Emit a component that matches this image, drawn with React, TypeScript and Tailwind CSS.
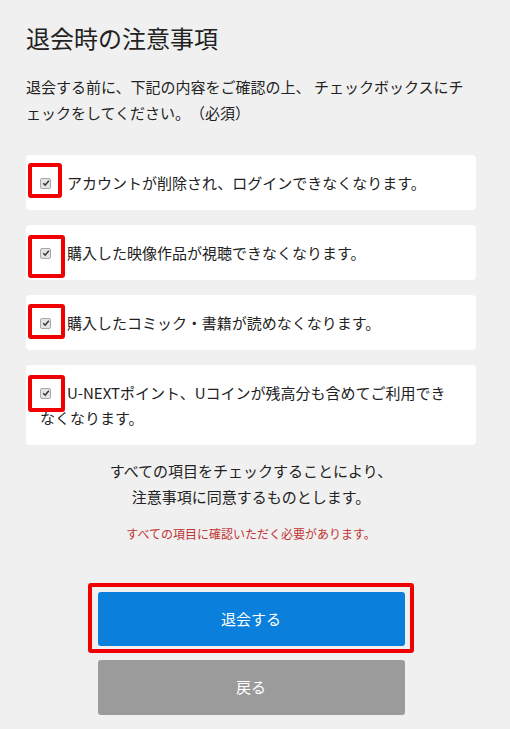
import React from 'react';

// 退会時の注意事項 — チェックリスト画面

const items = [
  { text: 'アカウントが削除され、ログインできなくなります。', box: 'top-[8px] w-[34px] h-[35px]' },
  { text: '購入した映像作品が視聴できなくなります。', box: 'top-[10px] w-[37px] h-[43px]' },
  { text: '購入したコミック・書籍が読めなくなります。', box: 'top-[9px] w-[37px] h-[35px]' },
  { text: 'U-NEXTポイント、Uコインが残高分も含めてご利用できなくなります。', box: 'top-[10px] w-[37px] h-[37px]' },
];

function CheckMark() {
  return (
    <span className="inline-flex items-center justify-center w-[11px] h-[11px] mr-[16px] align-[2px] bg-[#e4e4e4] border border-[#a8a8a8] rounded-[2px]">
      <svg viewBox="0 0 10 10" className="w-[8px] h-[8px]">
        <path d="M1.5 5.2 L4 7.6 L8.6 2.2" fill="none" stroke="#3a3a3a" strokeWidth={1.8} />
      </svg>
    </span>
  );
}

export default function App() {
  return (
    <div
      className="min-h-[729px] bg-[#f0f0f0] pl-[26px] pr-[34px] pt-[20px] pb-[15px] text-[#222] [text-spacing-trim:space-all]"
      style={{ fontFamily: '"Noto Sans CJK JP", "Noto Sans", sans-serif' }}
    >
      {/* 見出し */}
      <h1 className="text-[24px] leading-[36px] font-normal">退会時の注意事項</h1>
      <p className="mt-[18px] text-[15px] leading-[26px]">
        退会する前に、下記の内容をご確認の上、 チェックボックスにチェックをしてください。（必須）
      </p>

      {/* チェック項目 */}
      <div className="mt-[29px] flex flex-col gap-[15px]">
        {items.map((item) => (
          <label key={item.text} className="relative block bg-white rounded-[4px] pl-[14px] pr-[24px] py-[15px] text-[15px] leading-[25px]">
            <CheckMark />
            {item.text}
            {/* 注釈の赤枠 */}
            <span className={`absolute left-[2px] border-[4px] border-[#f00000] rounded-[3px] ${item.box}`} />
          </label>
        ))}
      </div>

      <p className="mt-[13px] text-center text-[15px] leading-[26px]">
        すべての項目をチェックすることにより、
        <br />
        注意事項に同意するものとします。
      </p>
      <p className="mt-[15px] text-center text-[12px] leading-[18px] text-[#c03333]">
        すべての項目に確認いただく必要があります。
      </p>

      {/* ボタン */}
      <div className="mt-[49px] flex flex-col items-center gap-[14px]">
        <div className="relative">
          <button className="block w-[307px] h-[54px] bg-[#0a7fdc] text-white text-[15px] rounded-[3px]">
            退会する
          </button>
          <span className="absolute -left-[10px] -right-[9px] -top-[9px] -bottom-[7px] border-[4px] border-[#f00000] rounded-[3px]" />
        </div>
        <button className="block w-[307px] h-[55px] bg-[#9b9b9b] text-white text-[15px] rounded-[3px]">
          戻る
        </button>
      </div>
    </div>
  );
}
